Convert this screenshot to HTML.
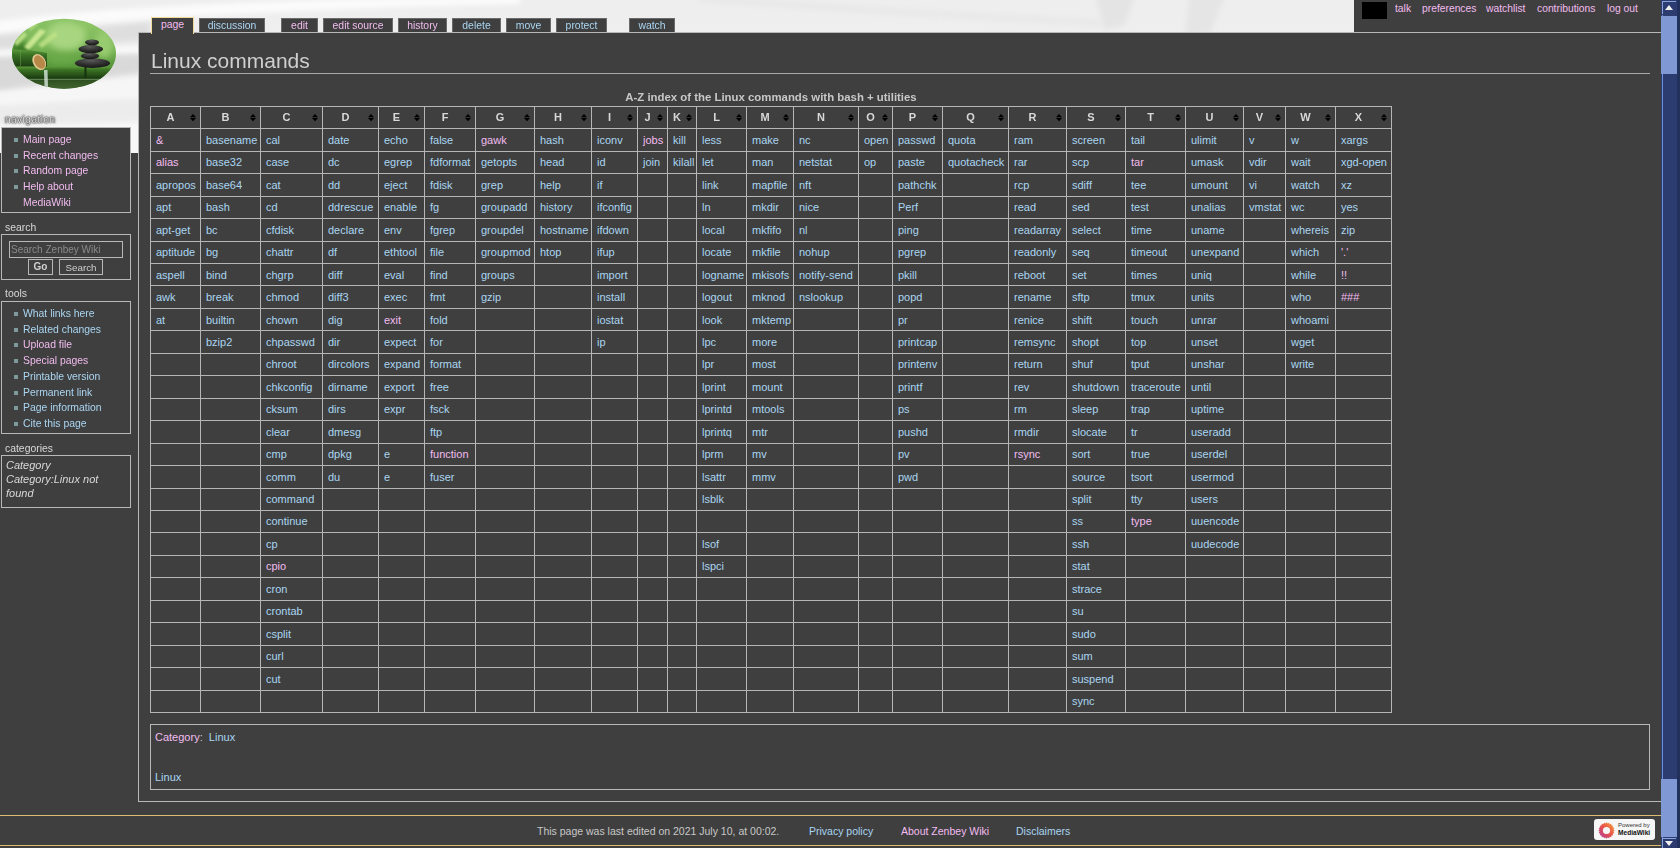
<!DOCTYPE html>
<html><head><meta charset="utf-8"><title>Linux commands</title>
<style>
html,body{margin:0;padding:0;}
body{width:1680px;height:848px;overflow:hidden;position:relative;background:#3f3f3f;font-family:"Liberation Sans",sans-serif;color:#d0d0d0;}
.abs{position:absolute;}
#hdrbg{position:absolute;left:0;top:0;}
#content{position:absolute;left:138px;top:32px;width:1600px;height:768px;border:1px solid #b8b8b8;background:#3f3f3f;}
.tab{position:absolute;top:17px;height:14px;border:1px solid #6a6a6a;border-bottom:none;background:#3f3f3f;font-size:10.4px;line-height:13px;text-align:center;white-space:nowrap;}
.tab.sel{border-color:#f0dc98;height:16px;}
a,.bl{color:#aad6f2;text-decoration:none;}
.pk{color:#f2bcf0;}
#title{position:absolute;left:151px;top:49px;font-size:21px;color:#cfcfcf;white-space:nowrap;}
#titleline{position:absolute;left:150px;top:73px;width:1500px;height:1px;background:#a8a8a8;}
#caption{position:absolute;left:150px;width:1242px;top:91px;text-align:center;font-weight:bold;font-size:11.4px;color:#c8c8c8;}
.vl{position:absolute;top:106px;width:1px;height:607px;background:#b6b6b6;}
.hl{position:absolute;left:150px;width:1242px;height:1px;background:#b6b6b6;}
.th{position:absolute;top:106px;height:22px;line-height:22px;text-align:center;font-weight:bold;font-size:11px;color:#d8d8d8;}
.sa{position:absolute;top:113.8px;}
.c{position:absolute;height:22px;line-height:23px;font-size:11px;color:#aad6f2;white-space:nowrap;}
.c.pk{color:#f2bcf0;}
.pbox{position:absolute;left:1px;width:130px;box-sizing:border-box;border:1px solid #b8b8b8;background:#3f3f3f;}
.plabel{position:absolute;left:5px;font-size:10.4px;color:#d8d8d8;white-space:nowrap;}
.pbox ul{margin:0;padding:0;list-style:none;}
.pbox li{position:relative;padding-left:21px;font-size:10.4px;line-height:15.7px;color:#f2bcf0;}
.pbox li.b{color:#aad6f2;}
.pbox li i{position:absolute;left:12px;top:6px;width:4px;height:4px;background:#7f9a9a;}
#foot{position:absolute;left:0;top:815px;width:1661px;height:29px;border-top:1px solid #dcbc72;border-bottom:1px solid #dcbc72;}
.ft{position:absolute;top:9px;font-size:10.5px;white-space:nowrap;}
#sb{position:absolute;left:1661px;top:0;width:19px;height:848px;background:#2c3c70;}
</style></head><body>
<svg id="hdrbg" width="1354" height="153" viewBox="0 0 1354 153">
<defs>
<linearGradient id="hg" x1="0" y1="0" x2="0" y2="1"><stop offset="0" stop-color="#eeeeee"/><stop offset="1" stop-color="#f0f0f0"/></linearGradient>
<filter id="hb" x="-10%" y="-50%" width="120%" height="200%"><feGaussianBlur stdDeviation="2.5"/></filter>
</defs>
<rect width="1354" height="153" fill="url(#hg)"/>
<g filter="url(#hb)">
<path d="M-10 22 Q150 0 520 -4 L520 4 Q160 12 -10 34Z" fill="#fbfbfb"/>
<path d="M-10 36 Q80 28 150 22 L150 40 Q80 44 -10 50Z" fill="#dedede"/>
<path d="M-10 51 Q80 48 150 46 L150 52 Q80 54 -10 56Z" fill="#fafafa"/>
<path d="M-10 57 Q80 55 150 54 L150 72 Q80 80 -10 92Z" fill="#d9d9d9"/>
<path d="M-10 92 Q80 82 150 76 L150 98 Q80 100 -10 106Z" fill="#f6f6f6"/>
<path d="M-10 106 Q80 100 150 98 L150 120 Q80 122 -10 126Z" fill="#ececec"/>
<path d="M-10 126 Q80 124 150 122 L150 160 L-10 160Z" fill="#f8f8f8"/>
<path d="M1095 -5 L1135 -5 L1125 24 L1105 30Z" fill="#dddddd" opacity="0.6"/>
<path d="M1190 -5 L1225 -5 L1210 34 L1185 34Z" fill="#e0e0e0" opacity="0.6"/>
<path d="M700 -5 Q900 10 1100 20 L1100 26 Q900 16 700 2Z" fill="#e4e4e4" opacity="0.6"/>
</g>
</svg>
<div id="content"></div>
<!-- logo -->
<svg class="abs" style="left:0;top:0" width="138" height="100" viewBox="0 0 138 100">
<defs>
<linearGradient id="lg" x1="0" y1="0" x2="0" y2="1"><stop offset="0" stop-color="#8cc468"/><stop offset="0.4" stop-color="#7ab656"/><stop offset="0.7" stop-color="#4e8e34"/><stop offset="1" stop-color="#2e5a1e"/></linearGradient>
<clipPath id="oc"><ellipse cx="64" cy="53.7" rx="52" ry="35"/></clipPath>
<filter id="bl3" x="-50%" y="-50%" width="200%" height="200%"><feGaussianBlur stdDeviation="3"/></filter>
<filter id="bl2b" x="-50%" y="-50%" width="200%" height="200%"><feGaussianBlur stdDeviation="1.3"/></filter>
<filter id="bl1" x="-20%" y="-20%" width="140%" height="140%"><feGaussianBlur stdDeviation="0.45"/></filter>
<linearGradient id="pole" x1="0" y1="0" x2="0" y2="1"><stop offset="0" stop-color="#5c9a3a"/><stop offset="0.3" stop-color="#3a7224"/><stop offset="1" stop-color="#1c3c12"/></linearGradient>
<linearGradient id="water" x1="0" y1="0" x2="0" y2="1"><stop offset="0" stop-color="#2a4a1c"/><stop offset="1" stop-color="#4a7038"/></linearGradient>
<radialGradient id="st" cx="0.45" cy="0.2" r="0.75"><stop offset="0" stop-color="#5c5c5c"/><stop offset="0.6" stop-color="#303030"/><stop offset="1" stop-color="#1a1a1a"/></radialGradient>
</defs>
<g clip-path="url(#oc)">
<rect x="8" y="15" width="115" height="80" fill="url(#lg)"/>
<g filter="url(#bl3)">
<ellipse cx="66" cy="36" rx="20" ry="14" fill="#a8d680"/>
<ellipse cx="104" cy="44" rx="9" ry="14" fill="#98cc70"/>
<ellipse cx="88" cy="24" rx="10" ry="5" fill="#8cc464"/>
<ellipse cx="62" cy="58" rx="14" ry="6" fill="#6aaa48"/>
<ellipse cx="20" cy="50" rx="10" ry="8" fill="#3e7a28"/>
</g>
<g filter="url(#bl2b)">
<path d="M24 47 L40 29 L46 31 L29 50Z" fill="#d0ec96" opacity="0.9"/>
<path d="M38 44 L55 32 L58 35 L42 48Z" fill="#c0e486" opacity="0.8"/>
<path d="M14 42 L24 32 L27 35 L17 46Z" fill="#c8e890" opacity="0.8"/>
<path d="M28 28 L36 22 L38 25 L30 31Z" fill="#b8e080" opacity="0.7"/>
</g>
<g filter="url(#bl1)">
<path d="M6 49.5 Q28 49 47 53 L47 67 L6 67Z" fill="url(#pole)"/>
<rect x="20" y="50" width="1" height="16" fill="#6aa048" opacity="0.5"/>
<rect x="6" y="66.5" width="112" height="11.5" fill="url(#pole)"/>
<rect x="84.5" y="66.5" width="2" height="11.5" fill="#183210"/>
<rect x="6" y="78" width="115" height="15" fill="url(#water)"/>
<rect x="24" y="79" width="90" height="0.8" fill="#7a9a68" opacity="0.8"/>
<ellipse cx="92.5" cy="63.2" rx="17.5" ry="4.8" fill="url(#st)"/>
<ellipse cx="90" cy="56" rx="9.2" ry="3.2" fill="url(#st)"/>
<ellipse cx="90.8" cy="49.1" rx="12.3" ry="4.2" fill="url(#st)"/>
<ellipse cx="92" cy="42.4" rx="7" ry="2.9" fill="url(#st)"/>
<ellipse cx="39.2" cy="62" rx="6.2" ry="8.6" fill="#e0c890" transform="rotate(-32 39.2 62)"/>
<ellipse cx="39.6" cy="62" rx="4.8" ry="7.2" fill="#b88848" transform="rotate(-32 39.6 62)"/>
<path d="M44 70 L47.5 70 L48 87 L44.5 87Z" fill="#d8e8e0" opacity="0.8"/>
</g>
</g>
</svg>
<div class="tab sel" style="left:151px;width:41px;"><span class="pk">page</span></div>
<div class="tab" style="left:199px;width:64px;top:18px;height:13px"><span class="bl">discussion</span></div>
<div class="tab" style="left:281px;width:35px;top:18px;height:13px"><span class="pk">edit</span></div>
<div class="tab" style="left:323px;width:68px;top:18px;height:13px"><span class="pk">edit source</span></div>
<div class="tab" style="left:398px;width:47px;top:18px;height:13px"><span class="pk">history</span></div>
<div class="tab" style="left:452px;width:47px;top:18px;height:13px"><span class="bl">delete</span></div>
<div class="tab" style="left:506px;width:43px;top:18px;height:13px"><span class="bl">move</span></div>
<div class="tab" style="left:556px;width:49px;top:18px;height:13px"><span class="bl">protect</span></div>
<div class="tab" style="left:629px;width:44px;top:18px;height:13px"><span class="bl">watch</span></div>
<!-- personal bar -->
<div class="abs" style="left:1354px;top:0;width:307px;height:32px;background:#3f3f3f;"></div>
<div class="abs" style="left:1362px;top:2px;width:25px;height:17px;background:#000;"></div>
<div class="abs pk" style="left:1395px;top:3px;font-size:10.3px;white-space:nowrap">talk</div>
<div class="abs pk" style="left:1422px;top:3px;font-size:10.3px;white-space:nowrap">preferences</div>
<div class="abs pk" style="left:1486px;top:3px;font-size:10.3px;white-space:nowrap">watchlist</div>
<div class="abs pk" style="left:1537px;top:3px;font-size:10.3px;white-space:nowrap">contributions</div>
<div class="abs pk" style="left:1607px;top:3px;font-size:10.3px;white-space:nowrap">log out</div>
<div id="title">Linux commands</div>
<div id="titleline"></div>
<div id="caption">A-Z index of the Linux commands with bash + utilities</div>
<div class="vl" style="left:150px"></div>
<div class="vl" style="left:200px"></div>
<div class="vl" style="left:260px"></div>
<div class="vl" style="left:322px"></div>
<div class="vl" style="left:378px"></div>
<div class="vl" style="left:424px"></div>
<div class="vl" style="left:475px"></div>
<div class="vl" style="left:534px"></div>
<div class="vl" style="left:591px"></div>
<div class="vl" style="left:637px"></div>
<div class="vl" style="left:667px"></div>
<div class="vl" style="left:696px"></div>
<div class="vl" style="left:746px"></div>
<div class="vl" style="left:793px"></div>
<div class="vl" style="left:858px"></div>
<div class="vl" style="left:892px"></div>
<div class="vl" style="left:942px"></div>
<div class="vl" style="left:1008px"></div>
<div class="vl" style="left:1066px"></div>
<div class="vl" style="left:1125px"></div>
<div class="vl" style="left:1185px"></div>
<div class="vl" style="left:1243px"></div>
<div class="vl" style="left:1285px"></div>
<div class="vl" style="left:1335px"></div>
<div class="vl" style="left:1391px"></div>
<div class="hl" style="top:106px"></div>
<div class="hl" style="top:128px"></div>
<div class="hl" style="top:151px"></div>
<div class="hl" style="top:173px"></div>
<div class="hl" style="top:196px"></div>
<div class="hl" style="top:218px"></div>
<div class="hl" style="top:241px"></div>
<div class="hl" style="top:263px"></div>
<div class="hl" style="top:285px"></div>
<div class="hl" style="top:308px"></div>
<div class="hl" style="top:330px"></div>
<div class="hl" style="top:353px"></div>
<div class="hl" style="top:375px"></div>
<div class="hl" style="top:398px"></div>
<div class="hl" style="top:420px"></div>
<div class="hl" style="top:443px"></div>
<div class="hl" style="top:465px"></div>
<div class="hl" style="top:488px"></div>
<div class="hl" style="top:510px"></div>
<div class="hl" style="top:532px"></div>
<div class="hl" style="top:555px"></div>
<div class="hl" style="top:577px"></div>
<div class="hl" style="top:600px"></div>
<div class="hl" style="top:622px"></div>
<div class="hl" style="top:645px"></div>
<div class="hl" style="top:667px"></div>
<div class="hl" style="top:690px"></div>
<div class="hl" style="top:712px"></div>
<div class="th" style="left:150.5px;width:40px">A</div>
<svg class="sa" style="left:190px" width="6" height="8" viewBox="0 0 6 8"><path d="M3 0L6 3.2H0Z M0 4H6L3 7.2Z" fill="#000"/></svg>
<div class="th" style="left:205.5px;width:40px">B</div>
<svg class="sa" style="left:250px" width="6" height="8" viewBox="0 0 6 8"><path d="M3 0L6 3.2H0Z M0 4H6L3 7.2Z" fill="#000"/></svg>
<div class="th" style="left:266.5px;width:40px">C</div>
<svg class="sa" style="left:312px" width="6" height="8" viewBox="0 0 6 8"><path d="M3 0L6 3.2H0Z M0 4H6L3 7.2Z" fill="#000"/></svg>
<div class="th" style="left:325.5px;width:40px">D</div>
<svg class="sa" style="left:368px" width="6" height="8" viewBox="0 0 6 8"><path d="M3 0L6 3.2H0Z M0 4H6L3 7.2Z" fill="#000"/></svg>
<div class="th" style="left:376.5px;width:40px">E</div>
<svg class="sa" style="left:414px" width="6" height="8" viewBox="0 0 6 8"><path d="M3 0L6 3.2H0Z M0 4H6L3 7.2Z" fill="#000"/></svg>
<div class="th" style="left:425.0px;width:40px">F</div>
<svg class="sa" style="left:465px" width="6" height="8" viewBox="0 0 6 8"><path d="M3 0L6 3.2H0Z M0 4H6L3 7.2Z" fill="#000"/></svg>
<div class="th" style="left:480.0px;width:40px">G</div>
<svg class="sa" style="left:524px" width="6" height="8" viewBox="0 0 6 8"><path d="M3 0L6 3.2H0Z M0 4H6L3 7.2Z" fill="#000"/></svg>
<div class="th" style="left:538.0px;width:40px">H</div>
<svg class="sa" style="left:581px" width="6" height="8" viewBox="0 0 6 8"><path d="M3 0L6 3.2H0Z M0 4H6L3 7.2Z" fill="#000"/></svg>
<div class="th" style="left:589.5px;width:40px">I</div>
<svg class="sa" style="left:627px" width="6" height="8" viewBox="0 0 6 8"><path d="M3 0L6 3.2H0Z M0 4H6L3 7.2Z" fill="#000"/></svg>
<div class="th" style="left:627.5px;width:40px">J</div>
<svg class="sa" style="left:657px" width="6" height="8" viewBox="0 0 6 8"><path d="M3 0L6 3.2H0Z M0 4H6L3 7.2Z" fill="#000"/></svg>
<div class="th" style="left:657.0px;width:40px">K</div>
<svg class="sa" style="left:686px" width="6" height="8" viewBox="0 0 6 8"><path d="M3 0L6 3.2H0Z M0 4H6L3 7.2Z" fill="#000"/></svg>
<div class="th" style="left:696.5px;width:40px">L</div>
<svg class="sa" style="left:736px" width="6" height="8" viewBox="0 0 6 8"><path d="M3 0L6 3.2H0Z M0 4H6L3 7.2Z" fill="#000"/></svg>
<div class="th" style="left:745.0px;width:40px">M</div>
<svg class="sa" style="left:783px" width="6" height="8" viewBox="0 0 6 8"><path d="M3 0L6 3.2H0Z M0 4H6L3 7.2Z" fill="#000"/></svg>
<div class="th" style="left:801.0px;width:40px">N</div>
<svg class="sa" style="left:848px" width="6" height="8" viewBox="0 0 6 8"><path d="M3 0L6 3.2H0Z M0 4H6L3 7.2Z" fill="#000"/></svg>
<div class="th" style="left:850.5px;width:40px">O</div>
<svg class="sa" style="left:882px" width="6" height="8" viewBox="0 0 6 8"><path d="M3 0L6 3.2H0Z M0 4H6L3 7.2Z" fill="#000"/></svg>
<div class="th" style="left:892.5px;width:40px">P</div>
<svg class="sa" style="left:932px" width="6" height="8" viewBox="0 0 6 8"><path d="M3 0L6 3.2H0Z M0 4H6L3 7.2Z" fill="#000"/></svg>
<div class="th" style="left:950.5px;width:40px">Q</div>
<svg class="sa" style="left:998px" width="6" height="8" viewBox="0 0 6 8"><path d="M3 0L6 3.2H0Z M0 4H6L3 7.2Z" fill="#000"/></svg>
<div class="th" style="left:1012.5px;width:40px">R</div>
<svg class="sa" style="left:1056px" width="6" height="8" viewBox="0 0 6 8"><path d="M3 0L6 3.2H0Z M0 4H6L3 7.2Z" fill="#000"/></svg>
<div class="th" style="left:1071.0px;width:40px">S</div>
<svg class="sa" style="left:1115px" width="6" height="8" viewBox="0 0 6 8"><path d="M3 0L6 3.2H0Z M0 4H6L3 7.2Z" fill="#000"/></svg>
<div class="th" style="left:1130.5px;width:40px">T</div>
<svg class="sa" style="left:1175px" width="6" height="8" viewBox="0 0 6 8"><path d="M3 0L6 3.2H0Z M0 4H6L3 7.2Z" fill="#000"/></svg>
<div class="th" style="left:1189.5px;width:40px">U</div>
<svg class="sa" style="left:1233px" width="6" height="8" viewBox="0 0 6 8"><path d="M3 0L6 3.2H0Z M0 4H6L3 7.2Z" fill="#000"/></svg>
<div class="th" style="left:1239.5px;width:40px">V</div>
<svg class="sa" style="left:1275px" width="6" height="8" viewBox="0 0 6 8"><path d="M3 0L6 3.2H0Z M0 4H6L3 7.2Z" fill="#000"/></svg>
<div class="th" style="left:1285.5px;width:40px">W</div>
<svg class="sa" style="left:1325px" width="6" height="8" viewBox="0 0 6 8"><path d="M3 0L6 3.2H0Z M0 4H6L3 7.2Z" fill="#000"/></svg>
<div class="th" style="left:1338.5px;width:40px">X</div>
<svg class="sa" style="left:1381px" width="6" height="8" viewBox="0 0 6 8"><path d="M3 0L6 3.2H0Z M0 4H6L3 7.2Z" fill="#000"/></svg>
<div class="c pk" style="left:156px;top:129px">&amp;</div>
<div class="c pk" style="left:156px;top:151px">alias</div>
<div class="c" style="left:156px;top:174px">apropos</div>
<div class="c" style="left:156px;top:196px">apt</div>
<div class="c" style="left:156px;top:219px">apt-get</div>
<div class="c" style="left:156px;top:241px">aptitude</div>
<div class="c" style="left:156px;top:264px">aspell</div>
<div class="c" style="left:156px;top:286px">awk</div>
<div class="c" style="left:156px;top:309px">at</div>
<div class="c" style="left:206px;top:129px">basename</div>
<div class="c" style="left:206px;top:151px">base32</div>
<div class="c" style="left:206px;top:174px">base64</div>
<div class="c" style="left:206px;top:196px">bash</div>
<div class="c" style="left:206px;top:219px">bc</div>
<div class="c" style="left:206px;top:241px">bg</div>
<div class="c" style="left:206px;top:264px">bind</div>
<div class="c" style="left:206px;top:286px">break</div>
<div class="c" style="left:206px;top:309px">builtin</div>
<div class="c" style="left:206px;top:331px">bzip2</div>
<div class="c" style="left:266px;top:129px">cal</div>
<div class="c" style="left:266px;top:151px">case</div>
<div class="c" style="left:266px;top:174px">cat</div>
<div class="c" style="left:266px;top:196px">cd</div>
<div class="c" style="left:266px;top:219px">cfdisk</div>
<div class="c" style="left:266px;top:241px">chattr</div>
<div class="c" style="left:266px;top:264px">chgrp</div>
<div class="c" style="left:266px;top:286px">chmod</div>
<div class="c" style="left:266px;top:309px">chown</div>
<div class="c" style="left:266px;top:331px">chpasswd</div>
<div class="c" style="left:266px;top:353px">chroot</div>
<div class="c" style="left:266px;top:376px">chkconfig</div>
<div class="c" style="left:266px;top:398px">cksum</div>
<div class="c" style="left:266px;top:421px">clear</div>
<div class="c" style="left:266px;top:443px">cmp</div>
<div class="c" style="left:266px;top:466px">comm</div>
<div class="c" style="left:266px;top:488px">command</div>
<div class="c" style="left:266px;top:510px">continue</div>
<div class="c" style="left:266px;top:533px">cp</div>
<div class="c pk" style="left:266px;top:555px">cpio</div>
<div class="c" style="left:266px;top:578px">cron</div>
<div class="c" style="left:266px;top:600px">crontab</div>
<div class="c" style="left:266px;top:623px">csplit</div>
<div class="c" style="left:266px;top:645px">curl</div>
<div class="c" style="left:266px;top:668px">cut</div>
<div class="c" style="left:328px;top:129px">date</div>
<div class="c" style="left:328px;top:151px">dc</div>
<div class="c" style="left:328px;top:174px">dd</div>
<div class="c" style="left:328px;top:196px">ddrescue</div>
<div class="c" style="left:328px;top:219px">declare</div>
<div class="c" style="left:328px;top:241px">df</div>
<div class="c" style="left:328px;top:264px">diff</div>
<div class="c" style="left:328px;top:286px">diff3</div>
<div class="c" style="left:328px;top:309px">dig</div>
<div class="c" style="left:328px;top:331px">dir</div>
<div class="c" style="left:328px;top:353px">dircolors</div>
<div class="c" style="left:328px;top:376px">dirname</div>
<div class="c" style="left:328px;top:398px">dirs</div>
<div class="c" style="left:328px;top:421px">dmesg</div>
<div class="c" style="left:328px;top:443px">dpkg</div>
<div class="c" style="left:328px;top:466px">du</div>
<div class="c" style="left:384px;top:129px">echo</div>
<div class="c" style="left:384px;top:151px">egrep</div>
<div class="c" style="left:384px;top:174px">eject</div>
<div class="c" style="left:384px;top:196px">enable</div>
<div class="c" style="left:384px;top:219px">env</div>
<div class="c" style="left:384px;top:241px">ethtool</div>
<div class="c" style="left:384px;top:264px">eval</div>
<div class="c" style="left:384px;top:286px">exec</div>
<div class="c pk" style="left:384px;top:309px">exit</div>
<div class="c" style="left:384px;top:331px">expect</div>
<div class="c" style="left:384px;top:353px">expand</div>
<div class="c" style="left:384px;top:376px">export</div>
<div class="c" style="left:384px;top:398px">expr</div>
<div class="c" style="left:384px;top:443px">e</div>
<div class="c" style="left:384px;top:466px">e</div>
<div class="c" style="left:430px;top:129px">false</div>
<div class="c" style="left:430px;top:151px">fdformat</div>
<div class="c" style="left:430px;top:174px">fdisk</div>
<div class="c" style="left:430px;top:196px">fg</div>
<div class="c" style="left:430px;top:219px">fgrep</div>
<div class="c" style="left:430px;top:241px">file</div>
<div class="c" style="left:430px;top:264px">find</div>
<div class="c" style="left:430px;top:286px">fmt</div>
<div class="c" style="left:430px;top:309px">fold</div>
<div class="c" style="left:430px;top:331px">for</div>
<div class="c" style="left:430px;top:353px">format</div>
<div class="c" style="left:430px;top:376px">free</div>
<div class="c" style="left:430px;top:398px">fsck</div>
<div class="c" style="left:430px;top:421px">ftp</div>
<div class="c pk" style="left:430px;top:443px">function</div>
<div class="c" style="left:430px;top:466px">fuser</div>
<div class="c pk" style="left:481px;top:129px">gawk</div>
<div class="c" style="left:481px;top:151px">getopts</div>
<div class="c" style="left:481px;top:174px">grep</div>
<div class="c" style="left:481px;top:196px">groupadd</div>
<div class="c" style="left:481px;top:219px">groupdel</div>
<div class="c" style="left:481px;top:241px">groupmod</div>
<div class="c" style="left:481px;top:264px">groups</div>
<div class="c" style="left:481px;top:286px">gzip</div>
<div class="c" style="left:540px;top:129px">hash</div>
<div class="c" style="left:540px;top:151px">head</div>
<div class="c" style="left:540px;top:174px">help</div>
<div class="c" style="left:540px;top:196px">history</div>
<div class="c" style="left:540px;top:219px">hostname</div>
<div class="c" style="left:540px;top:241px">htop</div>
<div class="c" style="left:597px;top:129px">iconv</div>
<div class="c" style="left:597px;top:151px">id</div>
<div class="c" style="left:597px;top:174px">if</div>
<div class="c" style="left:597px;top:196px">ifconfig</div>
<div class="c" style="left:597px;top:219px">ifdown</div>
<div class="c" style="left:597px;top:241px">ifup</div>
<div class="c" style="left:597px;top:264px">import</div>
<div class="c" style="left:597px;top:286px">install</div>
<div class="c" style="left:597px;top:309px">iostat</div>
<div class="c" style="left:597px;top:331px">ip</div>
<div class="c pk" style="left:643px;top:129px">jobs</div>
<div class="c" style="left:643px;top:151px">join</div>
<div class="c" style="left:673px;top:129px">kill</div>
<div class="c" style="left:673px;top:151px">kilall</div>
<div class="c" style="left:702px;top:129px">less</div>
<div class="c" style="left:702px;top:151px">let</div>
<div class="c" style="left:702px;top:174px">link</div>
<div class="c" style="left:702px;top:196px">ln</div>
<div class="c" style="left:702px;top:219px">local</div>
<div class="c" style="left:702px;top:241px">locate</div>
<div class="c" style="left:702px;top:264px">logname</div>
<div class="c" style="left:702px;top:286px">logout</div>
<div class="c" style="left:702px;top:309px">look</div>
<div class="c" style="left:702px;top:331px">lpc</div>
<div class="c" style="left:702px;top:353px">lpr</div>
<div class="c" style="left:702px;top:376px">lprint</div>
<div class="c" style="left:702px;top:398px">lprintd</div>
<div class="c" style="left:702px;top:421px">lprintq</div>
<div class="c" style="left:702px;top:443px">lprm</div>
<div class="c" style="left:702px;top:466px">lsattr</div>
<div class="c" style="left:702px;top:488px">lsblk</div>
<div class="c" style="left:702px;top:533px">lsof</div>
<div class="c" style="left:702px;top:555px">lspci</div>
<div class="c" style="left:752px;top:129px">make</div>
<div class="c" style="left:752px;top:151px">man</div>
<div class="c" style="left:752px;top:174px">mapfile</div>
<div class="c" style="left:752px;top:196px">mkdir</div>
<div class="c" style="left:752px;top:219px">mkfifo</div>
<div class="c" style="left:752px;top:241px">mkfile</div>
<div class="c" style="left:752px;top:264px">mkisofs</div>
<div class="c" style="left:752px;top:286px">mknod</div>
<div class="c" style="left:752px;top:309px">mktemp</div>
<div class="c" style="left:752px;top:331px">more</div>
<div class="c" style="left:752px;top:353px">most</div>
<div class="c" style="left:752px;top:376px">mount</div>
<div class="c" style="left:752px;top:398px">mtools</div>
<div class="c" style="left:752px;top:421px">mtr</div>
<div class="c" style="left:752px;top:443px">mv</div>
<div class="c" style="left:752px;top:466px">mmv</div>
<div class="c" style="left:799px;top:129px">nc</div>
<div class="c" style="left:799px;top:151px">netstat</div>
<div class="c" style="left:799px;top:174px">nft</div>
<div class="c" style="left:799px;top:196px">nice</div>
<div class="c" style="left:799px;top:219px">nl</div>
<div class="c" style="left:799px;top:241px">nohup</div>
<div class="c" style="left:799px;top:264px">notify-send</div>
<div class="c" style="left:799px;top:286px">nslookup</div>
<div class="c" style="left:864px;top:129px">open</div>
<div class="c" style="left:864px;top:151px">op</div>
<div class="c" style="left:898px;top:129px">passwd</div>
<div class="c" style="left:898px;top:151px">paste</div>
<div class="c" style="left:898px;top:174px">pathchk</div>
<div class="c" style="left:898px;top:196px">Perf</div>
<div class="c" style="left:898px;top:219px">ping</div>
<div class="c" style="left:898px;top:241px">pgrep</div>
<div class="c" style="left:898px;top:264px">pkill</div>
<div class="c" style="left:898px;top:286px">popd</div>
<div class="c" style="left:898px;top:309px">pr</div>
<div class="c" style="left:898px;top:331px">printcap</div>
<div class="c" style="left:898px;top:353px">printenv</div>
<div class="c" style="left:898px;top:376px">printf</div>
<div class="c" style="left:898px;top:398px">ps</div>
<div class="c" style="left:898px;top:421px">pushd</div>
<div class="c" style="left:898px;top:443px">pv</div>
<div class="c" style="left:898px;top:466px">pwd</div>
<div class="c" style="left:948px;top:129px">quota</div>
<div class="c" style="left:948px;top:151px">quotacheck</div>
<div class="c" style="left:1014px;top:129px">ram</div>
<div class="c" style="left:1014px;top:151px">rar</div>
<div class="c" style="left:1014px;top:174px">rcp</div>
<div class="c" style="left:1014px;top:196px">read</div>
<div class="c" style="left:1014px;top:219px">readarray</div>
<div class="c" style="left:1014px;top:241px">readonly</div>
<div class="c" style="left:1014px;top:264px">reboot</div>
<div class="c" style="left:1014px;top:286px">rename</div>
<div class="c" style="left:1014px;top:309px">renice</div>
<div class="c" style="left:1014px;top:331px">remsync</div>
<div class="c" style="left:1014px;top:353px">return</div>
<div class="c" style="left:1014px;top:376px">rev</div>
<div class="c" style="left:1014px;top:398px">rm</div>
<div class="c" style="left:1014px;top:421px">rmdir</div>
<div class="c pk" style="left:1014px;top:443px">rsync</div>
<div class="c" style="left:1072px;top:129px">screen</div>
<div class="c" style="left:1072px;top:151px">scp</div>
<div class="c" style="left:1072px;top:174px">sdiff</div>
<div class="c" style="left:1072px;top:196px">sed</div>
<div class="c" style="left:1072px;top:219px">select</div>
<div class="c" style="left:1072px;top:241px">seq</div>
<div class="c" style="left:1072px;top:264px">set</div>
<div class="c" style="left:1072px;top:286px">sftp</div>
<div class="c" style="left:1072px;top:309px">shift</div>
<div class="c" style="left:1072px;top:331px">shopt</div>
<div class="c" style="left:1072px;top:353px">shuf</div>
<div class="c" style="left:1072px;top:376px">shutdown</div>
<div class="c" style="left:1072px;top:398px">sleep</div>
<div class="c" style="left:1072px;top:421px">slocate</div>
<div class="c" style="left:1072px;top:443px">sort</div>
<div class="c" style="left:1072px;top:466px">source</div>
<div class="c" style="left:1072px;top:488px">split</div>
<div class="c" style="left:1072px;top:510px">ss</div>
<div class="c" style="left:1072px;top:533px">ssh</div>
<div class="c" style="left:1072px;top:555px">stat</div>
<div class="c" style="left:1072px;top:578px">strace</div>
<div class="c" style="left:1072px;top:600px">su</div>
<div class="c" style="left:1072px;top:623px">sudo</div>
<div class="c" style="left:1072px;top:645px">sum</div>
<div class="c" style="left:1072px;top:668px">suspend</div>
<div class="c" style="left:1072px;top:690px">sync</div>
<div class="c" style="left:1131px;top:129px">tail</div>
<div class="c pk" style="left:1131px;top:151px">tar</div>
<div class="c" style="left:1131px;top:174px">tee</div>
<div class="c" style="left:1131px;top:196px">test</div>
<div class="c" style="left:1131px;top:219px">time</div>
<div class="c" style="left:1131px;top:241px">timeout</div>
<div class="c" style="left:1131px;top:264px">times</div>
<div class="c" style="left:1131px;top:286px">tmux</div>
<div class="c" style="left:1131px;top:309px">touch</div>
<div class="c" style="left:1131px;top:331px">top</div>
<div class="c" style="left:1131px;top:353px">tput</div>
<div class="c" style="left:1131px;top:376px">traceroute</div>
<div class="c" style="left:1131px;top:398px">trap</div>
<div class="c" style="left:1131px;top:421px">tr</div>
<div class="c" style="left:1131px;top:443px">true</div>
<div class="c" style="left:1131px;top:466px">tsort</div>
<div class="c" style="left:1131px;top:488px">tty</div>
<div class="c pk" style="left:1131px;top:510px">type</div>
<div class="c" style="left:1191px;top:129px">ulimit</div>
<div class="c" style="left:1191px;top:151px">umask</div>
<div class="c" style="left:1191px;top:174px">umount</div>
<div class="c" style="left:1191px;top:196px">unalias</div>
<div class="c" style="left:1191px;top:219px">uname</div>
<div class="c" style="left:1191px;top:241px">unexpand</div>
<div class="c" style="left:1191px;top:264px">uniq</div>
<div class="c" style="left:1191px;top:286px">units</div>
<div class="c" style="left:1191px;top:309px">unrar</div>
<div class="c" style="left:1191px;top:331px">unset</div>
<div class="c" style="left:1191px;top:353px">unshar</div>
<div class="c" style="left:1191px;top:376px">until</div>
<div class="c" style="left:1191px;top:398px">uptime</div>
<div class="c" style="left:1191px;top:421px">useradd</div>
<div class="c" style="left:1191px;top:443px">userdel</div>
<div class="c" style="left:1191px;top:466px">usermod</div>
<div class="c" style="left:1191px;top:488px">users</div>
<div class="c" style="left:1191px;top:510px">uuencode</div>
<div class="c" style="left:1191px;top:533px">uudecode</div>
<div class="c" style="left:1249px;top:129px">v</div>
<div class="c" style="left:1249px;top:151px">vdir</div>
<div class="c" style="left:1249px;top:174px">vi</div>
<div class="c" style="left:1249px;top:196px">vmstat</div>
<div class="c" style="left:1291px;top:129px">w</div>
<div class="c" style="left:1291px;top:151px">wait</div>
<div class="c" style="left:1291px;top:174px">watch</div>
<div class="c" style="left:1291px;top:196px">wc</div>
<div class="c" style="left:1291px;top:219px">whereis</div>
<div class="c" style="left:1291px;top:241px">which</div>
<div class="c" style="left:1291px;top:264px">while</div>
<div class="c" style="left:1291px;top:286px">who</div>
<div class="c" style="left:1291px;top:309px">whoami</div>
<div class="c" style="left:1291px;top:331px">wget</div>
<div class="c" style="left:1291px;top:353px">write</div>
<div class="c" style="left:1341px;top:129px">xargs</div>
<div class="c" style="left:1341px;top:151px">xgd-open</div>
<div class="c" style="left:1341px;top:174px">xz</div>
<div class="c" style="left:1341px;top:196px">yes</div>
<div class="c" style="left:1341px;top:219px">zip</div>
<div class="c pk" style="left:1341px;top:241px">&#x27;.&#x27;</div>
<div class="c pk" style="left:1341px;top:264px">!!</div>
<div class="c pk" style="left:1341px;top:286px">###</div>
<!-- category box -->
<div class="abs" style="left:150px;top:724px;width:1498px;height:64px;border:1px solid #b8b8b8;"></div>
<div class="abs" style="left:155px;top:731px;font-size:11px;white-space:nowrap"><span class="pk">Category</span><span style="color:#c8c8c8">:</span>&nbsp; <span class="bl">Linux</span></div>
<div class="abs bl" style="left:155px;top:771px;font-size:11px;">Linux</div>
<!-- sidebar -->
<div class="plabel" style="top:114px;color:#e4e4e4;letter-spacing:0.5px;font-size:10px;text-shadow:0 0 1px #111,0 0 1.5px #333,0 0 2.5px #555">navigation</div>
<div class="pbox" style="top:127px;height:84px;padding-top:4px;box-sizing:border-box;height:86px">
<ul><li><i></i>Main page</li><li><i></i>Recent changes</li><li><i></i>Random page</li><li><i></i>Help about<br>MediaWiki</li></ul></div>
<div class="plabel" style="top:222px">search</div>
<div class="pbox" style="top:234px;height:46px"></div>
<div class="abs" style="left:9px;top:241px;width:112px;height:15px;border:1px solid #b8b8b8;font-size:10px;line-height:15px;color:#8a8a8a;white-space:nowrap;overflow:hidden;padding-left:1px;box-sizing:border-box;width:114px;height:17px">Search Zenbey Wiki</div>
<div class="abs" style="left:28px;top:259px;width:23px;height:14px;border:1px solid #b8b8b8;font-size:10px;line-height:14px;text-align:center;font-weight:bold;color:#d0d0d0">Go</div>
<div class="abs" style="left:59px;top:259px;width:42px;height:14px;border:1px solid #b8b8b8;font-size:9.8px;line-height:15px;text-align:center;color:#d0d0d0">Search</div>
<div class="plabel" style="top:288px">tools</div>
<div class="pbox" style="top:301px;height:131px;padding-top:4px;box-sizing:border-box;height:133px">
<ul><li class="b"><i></i>What links here</li><li class="b"><i></i>Related changes</li><li><i></i>Upload file</li><li><i></i>Special pages</li><li class="b"><i></i>Printable version</li><li class="b"><i></i>Permanent link</li><li class="b"><i></i>Page information</li><li class="b"><i></i>Cite this page</li></ul></div>
<div class="plabel" style="top:443px">categories</div>
<div class="pbox" style="top:455px;height:53px"></div>
<div class="abs" style="left:6px;top:458px;width:110px;font-size:11px;line-height:14px;font-style:italic;color:#d8d8d8">Category Category:Linux not found</div>
<!-- footer -->
<div id="foot">
<div class="ft" style="left:537px;color:#c8c8c8">This page was last edited on 2021 July 10, at 00:02.</div>
<div class="ft bl" style="left:809px">Privacy policy</div>
<div class="ft pk" style="left:901px">About Zenbey Wiki</div>
<div class="ft bl" style="left:1016px">Disclaimers</div>
<div class="abs" style="left:1594px;top:3px;width:61px;height:21px;border-radius:3px;background:#f6f6f6;"></div>
<svg class="abs" style="left:1598px;top:6px" width="17" height="17" viewBox="0 0 17 17">
<defs><linearGradient id="sf" x1="1" y1="0" x2="0" y2="1"><stop offset="0" stop-color="#f7a83a"/><stop offset="0.5" stop-color="#e8504a"/><stop offset="1" stop-color="#a83aa0"/></linearGradient></defs>
<polygon points="16.70,8.50 15.41,9.60 16.30,11.03 14.74,11.68 15.13,13.32 13.45,13.45 13.32,15.13 11.68,14.74 11.03,16.30 9.60,15.41 8.50,16.70 7.40,15.41 5.97,16.30 5.32,14.74 3.68,15.13 3.55,13.45 1.87,13.32 2.26,11.68 0.70,11.03 1.59,9.60 0.30,8.50 1.59,7.40 0.70,5.97 2.26,5.32 1.87,3.68 3.55,3.55 3.68,1.87 5.32,2.26 5.97,0.70 7.40,1.59 8.50,0.30 9.60,1.59 11.03,0.70 11.68,2.26 13.32,1.87 13.45,3.55 15.13,3.68 14.74,5.32 16.30,5.97 15.41,7.40" fill="url(#sf)"/>
<circle cx="8.5" cy="8.5" r="3.6" fill="#f6f6f6"/>
</svg>
<div class="abs" style="left:1618px;top:6px;font-size:6px;line-height:6px;color:#333;white-space:nowrap">Powered by</div>
<div class="abs" style="left:1618px;top:13px;font-size:6.6px;line-height:7px;font-weight:bold;color:#111;white-space:nowrap">MediaWiki</div>
</div>
<!-- scrollbar -->
<div id="sb">
<div class="abs" style="left:1px;top:15px;width:1px;height:833px;background:#6f8fd6"></div>
<div class="abs" style="left:16px;top:0;width:3px;height:848px;background:#22305c"></div>
<div class="abs" style="left:1px;top:1px;width:14px;height:13px;border-top:1px solid #8aa2dc;border-left:1px solid #8aa2dc;box-sizing:border-box;background:#2c3c70"></div>
<svg class="abs" style="left:4px;top:5px" width="8" height="5" viewBox="0 0 8 5"><path d="M4 0L8 5H0Z" fill="#f0f0f0"/></svg>
<div class="abs" style="left:0;top:16px;width:16px;height:58px;background:#8099d4"></div>
<div class="abs" style="left:0;top:779px;width:16px;height:58px;background:#8099d4"></div>
<div class="abs" style="left:1px;top:838px;width:14px;height:10px;border-top:1px solid #8aa2dc;border-left:1px solid #8aa2dc;box-sizing:border-box;background:#2c3c70"></div>
<svg class="abs" style="left:4px;top:841px" width="8" height="5" viewBox="0 0 8 5"><path d="M0 0H8L4 5Z" fill="#f0f0f0"/></svg>
</div>
</body></html>
